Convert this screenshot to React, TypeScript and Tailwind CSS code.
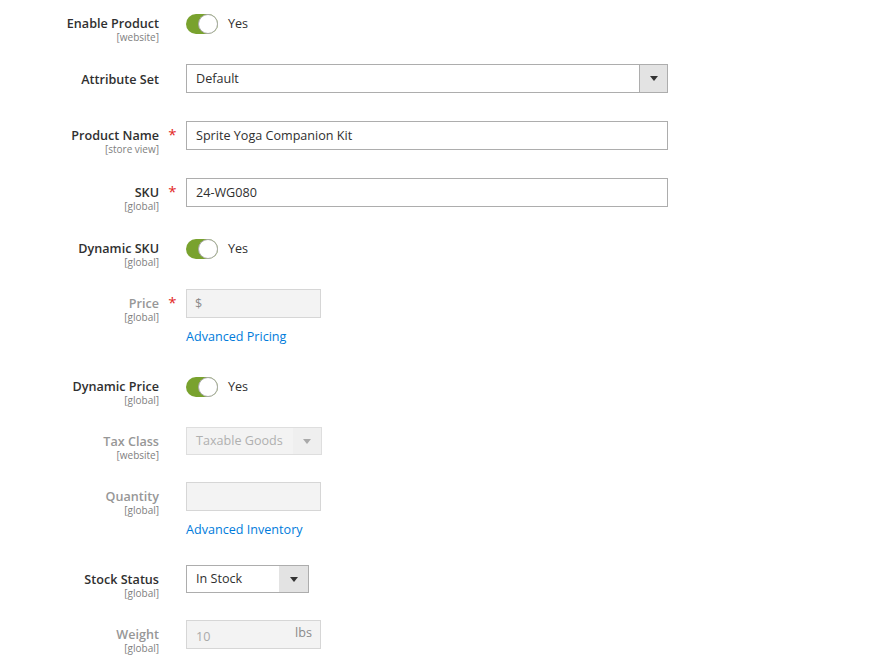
import React from 'react';

const font = { fontFamily: '"Open Sans", "Liberation Sans", sans-serif' };

function Label({ text, scope, disabled, required, pt = 'pt-[7px]' }: { text: string; scope?: string; disabled?: boolean; required?: boolean; pt?: string }) {
    return (
        <>
            <div className={`w-[159px] shrink-0 pb-[1px] text-right ${pt}`}>
                <div className={`text-[12.6px] leading-[16px] font-semibold ${disabled ? 'text-[#979797]' : 'text-[#303030]'}`}>{text}</div>
                {scope && <div className="text-[10px] leading-[10px] text-[#808080]">{scope}</div>}
            </div>
            <div className={`w-[27px] shrink-0 text-center ${pt}`}>
                {required && <div className="text-[15px] leading-[12px] text-[#e22626]">*</div>}
            </div>
        </>
    );
}

function Toggle() {
    return (
        <div className="flex items-center gap-[10px]">
            <div className="relative h-[20px] w-[32px] rounded-full bg-[#79a22e]">
                <div className="absolute right-0 top-0 h-[20px] w-[20px] rounded-full border border-[#aaaaaa] bg-white" />
            </div>
            <span className="text-[12.6px] leading-[20px] text-[#303030]">Yes</span>
        </div>
    );
}

function Arrow({ color }: { color: string }) {
    return <div className={`h-0 w-0 border-x-[4px] border-t-[5px] border-x-transparent ${color}`} />;
}

export default function App() {
    return (
        <div className="min-h-[663px] w-[881px] bg-white pt-[14px]" style={font}>
            {/* Enable Product */}
            <div className="flex items-start">
                <Label text="Enable Product" scope="[website]" pt="pt-[2px]" />
                <Toggle />
            </div>

            {/* Attribute Set */}
            <div className="mt-[21px] flex items-start">
                <Label text="Attribute Set" pt="pt-[8px]" />
                <div className="flex h-[29px] w-[482px] border border-[#adadad]">
                    <div className="flex-1 pl-[9px] text-[12.6px] leading-[27px] text-[#303030]">Default</div>
                    <div className="flex w-[28px] items-center justify-center border-l border-[#adadad] bg-[#e3e3e3]">
                        <Arrow color="border-t-[#333333]" />
                    </div>
                </div>
            </div>

            {/* Product Name */}
            <div className="mt-[28px] flex items-start">
                <Label text="Product Name" scope="[store view]" required />
                <div className="h-[29px] w-[482px] border border-[#adadad] pl-[9px] text-[12.6px] leading-[27px] text-[#303030]">
                    Sprite Yoga Companion Kit
                </div>
            </div>

            {/* SKU */}
            <div className="mt-[23px] flex items-start">
                <Label text="SKU" scope="[global]" required />
                <div className="h-[29px] w-[482px] border border-[#adadad] pl-[9px] text-[12.6px] leading-[27px] text-[#303030]">
                    24-WG080
                </div>
            </div>

            {/* Dynamic SKU */}
            <div className="mt-[27px] flex items-start">
                <Label text="Dynamic SKU" scope="[global]" pt="pt-[2px]" />
                <Toggle />
            </div>

            {/* Price */}
            <div className="mt-[21px] flex items-start">
                <Label text="Price" scope="[global]" required disabled />
                <div>
                    <div className="h-[29px] w-[135px] border border-[#d6d6d6] bg-[#f3f3f3] pl-[8px] text-[12.6px] leading-[27px] text-[#8a8a8a]">$</div>
                    <div className="mt-[10px] text-[12.6px] leading-[18px] text-[#007bdb]">Advanced Pricing</div>
                </div>
            </div>

            {/* Dynamic Price */}
            <div className="mt-[31px] flex items-start">
                <Label text="Dynamic Price" scope="[global]" pt="pt-[2px]" />
                <Toggle />
            </div>

            {/* Tax Class */}
            <div className="mt-[21px] flex items-start">
                <Label text="Tax Class" scope="[website]" disabled />
                <div className="flex h-[28px] w-[136px] border border-[#dedede] bg-[#f3f3f3]">
                    <div className="flex-1 pl-[9px] text-[12.6px] leading-[26px] text-[#b0b0b0]">Taxable Goods</div>
                    <div className="flex w-[28px] items-center justify-center bg-[#efefef]">
                        <Arrow color="border-t-[#aaaaaa]" />
                    </div>
                </div>
            </div>

            {/* Quantity */}
            <div className="mt-[21px] flex items-start">
                <Label text="Quantity" scope="[global]" disabled />
                <div>
                    <div className="h-[29px] w-[135px] border border-[#d6d6d6] bg-[#f3f3f3]" />
                    <div className="mt-[10px] text-[12.6px] leading-[18px] text-[#007bdb]">Advanced Inventory</div>
                </div>
            </div>

            {/* Stock Status */}
            <div className="mt-[26px] flex items-start">
                <Label text="Stock Status" scope="[global]" />
                <div className="flex h-[28px] w-[123px] border border-[#adadad]">
                    <div className="flex-1 pl-[9px] text-[12.6px] leading-[26px] text-[#303030]">In Stock</div>
                    <div className="flex w-[29px] items-center justify-center bg-[#e3e3e3]">
                        <Arrow color="border-t-[#333333]" />
                    </div>
                </div>
            </div>

            {/* Weight */}
            <div className="mt-[21px] flex items-start">
                <Label text="Weight" scope="[global]" disabled />
                <div className="flex h-[29px] w-[135px] border border-[#d6d6d6] bg-[#f3f3f3] pl-[9px] pr-[8px] text-[12.6px]">
                    <span className="flex-1 leading-[32px] text-[#aaaaaa]">10</span>
                    <span className="leading-[23px] text-[#8a8a8a]">lbs</span>
                </div>
            </div>
        </div>
    );
}
